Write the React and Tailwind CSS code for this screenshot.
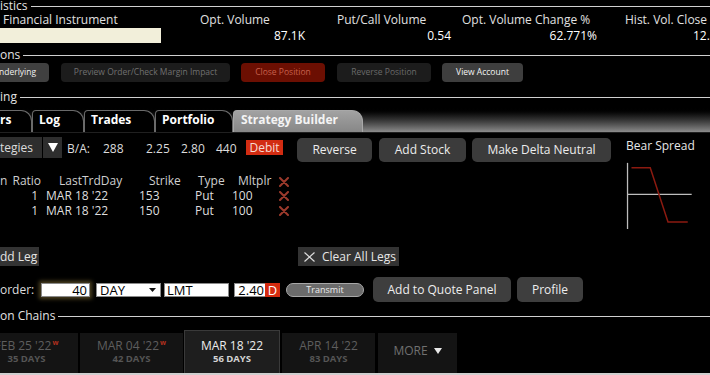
import React from "react";

function SectionHead({ label, className = "" }) {
  return (
    <div className={`flex items-center h-[12px] ${className}`}>
      <span className="text-[12px] leading-none text-[#e2e2e2] pr-[3px] whitespace-nowrap">{label}</span>
      <div className="flex-1 h-px bg-[#d0d0d0]" />
    </div>
  );
}

function Stat({ label, value, className }) {
  return (
    <div className={`flex flex-col shrink-0 ${className}`}>
      <div className="h-[16px] leading-[16px] text-[#e0e0e0] whitespace-nowrap">{label}</div>
      <div className="h-[15px] leading-[15px] text-right text-white">{value}</div>
    </div>
  );
}

function Tab({ label, className }) {
  return (
    <div
      className={`h-[22px] shrink-0 border border-b-0 rounded-tl-[4px] rounded-tr-[11px] text-[12px] font-bold leading-[18px] whitespace-nowrap ${className}`}
    >
      {label}
    </div>
  );
}

function RedX() {
  return (
    <svg width="10" height="10" viewBox="0 0 10 10" className="mt-[3px]">
      <path d="M1 1 L9 9 M9 1 L1 9" stroke="#9c3a2c" strokeWidth="2" strokeLinecap="round" />
    </svg>
  );
}

function DateTab({ date, days, weekly, active, className }) {
  return (
    <div
      className={`flex flex-col items-center shrink-0 ${
        active
          ? "h-[43px] bg-[#1e1e1e] border-t border-x border-[#3a3a3a] pt-[8px]"
          : "h-[40px] bg-[#141414] pt-[6px]"
      } ${className}`}
    >
      <div className={`text-[12px] leading-[14px] whitespace-nowrap ${active ? "text-[#ececec]" : "text-[#5e5e5e]"}`}>
        {date}
        {weekly && <sup className="text-[7px] font-bold text-[#b3301e] ml-[1px] -top-[5px]">w</sup>}
      </div>
      <div className={`text-[9.5px] font-bold leading-[11px] ${active ? "text-[#d4d4d4]" : "text-[#555]"}`}>{days}</div>
    </div>
  );
}

export default function App() {
  const legs = [
    { ratio: 1, day: "MAR 18 '22", strike: 153, type: "Put", mult: 100 },
    { ratio: 1, day: "MAR 18 '22", strike: 150, type: "Put", mult: 100 },
  ];

  return (
    <div className="w-[710px] h-[375px] overflow-hidden bg-black text-[#e6e6e6] font-['Open_Sans','Noto_Sans',sans-serif] text-[12px]">
      <SectionHead label="istics" />

      {/* statistics */}
      <div className="flex">
        <div className="flex flex-col w-[200px] shrink-0">
          <div className="h-[16px] leading-[16px] pl-[3px] text-[#e0e0e0]">Financial Instrument</div>
          <div className="h-[15px] w-[161px] bg-[#f2efda]" />
        </div>
        <Stat label="Opt. Volume" value="87.1K" className="w-[105px]" />
        <Stat label="Put/Call Volume" value="0.54" className="ml-[32px] w-[114px]" />
        <Stat label="Opt. Volume Change %" value="62.771%" className="ml-[11px] w-[135px]" />
        <div className="flex flex-col ml-[28px] w-[120px] shrink-0">
          <div className="h-[16px] leading-[16px] text-[#e0e0e0] whitespace-nowrap">Hist. Vol. Close</div>
          <div className="h-[15px] leading-[15px] pl-[68px] text-white whitespace-nowrap">12.</div>
        </div>
      </div>

      <SectionHead label="ons" className="mt-[6px]" />

      {/* action buttons */}
      <div className="flex h-[19px] mt-[2px] text-[8.5px]">
        <div className="w-[49px] bg-[#404040] rounded-r-[4px] flex items-center -indent-[1px] text-[#f0f0f0]">nderlying</div>
        <div className="ml-[12px] w-[169px] bg-[#1c1c1c] rounded-[4px] flex items-center justify-center text-[#707070]">
          Preview Order/Check Margin Impact
        </div>
        <div className="ml-[11px] w-[84px] bg-[#6c0f02] rounded-[4px] flex items-center justify-center text-[#c8604c]">
          Close Position
        </div>
        <div className="ml-[12px] w-[94px] bg-[#1c1c1c] rounded-[4px] flex items-center justify-center text-[#6a6a6a]">
          Reverse Position
        </div>
        <div className="ml-[11px] w-[81px] bg-[#3e3e3e] rounded-[4px] flex items-center justify-center text-[#f4f4f4]">
          View Account
        </div>
      </div>

      <SectionHead label="ing" className="mt-[9px]" />

      {/* tab strip */}
      <div className="h-[30px] flex items-end bg-linear-to-b from-black from-15% to-[#8c8c8c] border-b border-[#202020]">
        <Tab label="rs" className="w-[32px] bg-black border-[#6a6a6a] border-l-0 rounded-tl-none text-white" />
        <Tab label="Log" className="w-[52px] bg-black border-[#6a6a6a] text-white pl-[6px]" />
        <Tab label="Trades" className="w-[71px] bg-black border-[#6a6a6a] text-white pl-[6px]" />
        <Tab label="Portfolio" className="w-[78px] bg-black border-[#6a6a6a] text-white pl-[6px]" />
        <Tab
          label="Strategy Builder"
          className="w-[130px] bg-linear-to-b from-[#a2a2a2] to-[#878787] border-[#a8a8a8] text-[#f4f4f4] pl-[7px]"
        />
      </div>

      {/* strategy builder */}
      <div className="flex h-[93px] mt-[4px]">
        <div className="w-[626px] shrink-0">
          <div className="flex items-start h-[25px] text-[#dcdcdc]">
            <div className="w-[42px] h-[21px] bg-[#2e2e2e] leading-[21px] whitespace-nowrap">tegies</div>
            <div className="ml-[1px] w-[19px] h-[21px] bg-[#2e2e2e] flex items-center justify-center">
              <svg width="10" height="9" viewBox="0 0 10 9">
                <polygon points="0,0 10,0 5,9" fill="#fff" />
              </svg>
            </div>
            <span className="ml-[5px] w-[36px] leading-[21px] mt-[1px]">B/A:</span>
            <span className="w-[43px] leading-[21px] mt-[1px]">288</span>
            <span className="w-[35px] leading-[21px] mt-[1px]">2.25</span>
            <span className="w-[35px] leading-[21px] mt-[1px]">2.80</span>
            <span className="w-[30px] leading-[21px] mt-[1px]">440</span>
            <div className="w-[37px] h-[15px] mt-[3px] bg-[#d22c12] text-[#f7dcd4] leading-[15px] text-center">Debit</div>
            <div className="ml-[14px] w-[75px] h-[24px] mt-[1px] rounded-[5px] bg-[#3b3b3b] flex items-center justify-center text-[#ececec]">
              Reverse
            </div>
            <div className="ml-[7px] w-[87px] h-[24px] mt-[1px] rounded-[5px] bg-[#3b3b3b] flex items-center justify-center text-[#ececec]">
              Add Stock
            </div>
            <div className="ml-[6px] w-[139px] h-[24px] mt-[1px] rounded-[5px] bg-[#3b3b3b] flex items-center justify-center text-[#ececec]">
              Make Delta Neutral
            </div>
          </div>

          {/* legs table */}
          <div className="mt-[12px] flex h-[14px] leading-[14px] text-[#cfcfcf] whitespace-nowrap">
            <span className="w-[59px]">n <span className="ml-[2px]">Ratio</span></span>
            <span className="w-[90px]">LastTrdDay</span>
            <span className="w-[49px]">Strike</span>
            <span className="w-[40px]">Type</span>
            <span className="w-[41px]">Mltplr</span>
            <RedX />
          </div>
          {legs.map((l, i) => (
            <div key={i} className="flex h-[15px] leading-[15px] text-[#dedede] whitespace-nowrap">
              <span className="w-[38px] text-right">{l.ratio}</span>
              <span className="ml-[8px] w-[93px]">{l.day}</span>
              <span className="w-[56px]">{l.strike}</span>
              <span className="w-[37px]">{l.type}</span>
              <span className="w-[47px]">{l.mult}</span>
              <RedX />
            </div>
          ))}
        </div>

        <div className="flex-1 flex flex-col">
          <div className="mt-[1px] leading-[15px] text-[#e6e6e6] whitespace-nowrap">Bear Spread</div>
          <svg width="84" height="78" viewBox="0 0 84 78">
            <line x1="1" y1="10" x2="1" y2="77" stroke="#bdbdbd" strokeWidth="1.3" />
            <line x1="1" y1="42" x2="66" y2="42" stroke="#bdbdbd" strokeWidth="1.3" />
            <polyline points="5,15 24,15 42,70 62,70" fill="none" stroke="#8c1a10" strokeWidth="1.5" />
          </svg>
        </div>
      </div>

      {/* leg buttons */}
      <div className="flex h-[19px] mt-[17px]">
        <div className="w-[39px] bg-[#333] leading-[19px] text-[#e6e6e6] whitespace-nowrap">dd Leg</div>
        <div className="ml-[259px] w-[101px] bg-[#333] flex items-center pl-[6px] text-[#e6e6e6] whitespace-nowrap">
          <svg width="11" height="10" viewBox="0 0 11 10">
            <path d="M0.5 0.5 L10.5 9.5 M10.5 0.5 L0.5 9.5" stroke="#dcdcdc" strokeWidth="1.2" />
          </svg>
          <span className="ml-[7px]">Clear All Legs</span>
        </div>
      </div>

      {/* order row */}
      <div className="flex items-center h-[25px] mt-[11px] text-[13px]">
        <span className="w-[41px] text-[12px] text-[#dcdcdc]">order:</span>
        <div className="w-[49px] h-[14px] bg-white border border-[#8a8a8a] text-black text-right pr-[2px] leading-[12px] shadow-[0_0_4px_2px_rgba(140,120,60,0.55)]">
          40
        </div>
        <div className="ml-[6px] w-[65px] h-[14px] bg-white border border-[#8a8a8a] text-black leading-[12px] pl-[3px] pr-[4px] flex items-center justify-between">
          <span>DAY</span>
          <svg width="7" height="4" viewBox="0 0 7 4">
            <polygon points="0,0 7,0 3.5,4" fill="#111" />
          </svg>
        </div>
        <div className="ml-[3px] w-[65px] h-[14px] bg-white border border-[#8a8a8a] text-black leading-[12px] pl-[2px]">LMT</div>
        <div className="ml-[5px] flex">
          <div className="w-[31px] h-[14px] bg-white border border-r-0 border-[#8a8a8a] text-black text-right pr-[1px] leading-[12px]">2.40</div>
          <div className="w-[15px] h-[14px] bg-[#d42b10] text-white text-center leading-[14px]">D</div>
        </div>
        <div className="ml-[6px] w-[78px] h-[14px] rounded-full bg-[#6b6b6b] border border-[#a8a8a8] text-[9px] leading-[12px] text-center text-[#ececec]">
          Transmit
        </div>
        <div className="ml-[9px] w-[138px] h-[25px] rounded-[5px] bg-[#3e3e3e] flex items-center justify-center text-[12px] text-[#ededed]">
          Add to Quote Panel
        </div>
        <div className="ml-[6px] w-[66px] h-[25px] rounded-[5px] bg-[#3e3e3e] flex items-center justify-center text-[12px] text-[#ededed]">
          Profile
        </div>
      </div>

      <SectionHead label="on Chains" className="mt-[8px]" />

      {/* expiry tabs */}
      <div className="flex items-end h-[43px] mt-[8px]">
        <DateTab date="FEB 25 '22" days="35 DAYS" weekly className="w-[103px] -ml-[25px]" />
        <DateTab date="MAR 04 '22" days="42 DAYS" weekly className="ml-[2px] w-[103px]" />
        <DateTab date="MAR 18 '22" days="56 DAYS" active className="ml-[1px] w-[96px]" />
        <DateTab date="APR 14 '22" days="83 DAYS" className="ml-[2px] w-[93px]" />
        <div className="ml-[3px] w-[79px] h-[40px] shrink-0 bg-[#141414] flex items-center justify-center pb-[4px] text-[#707070]">
          MORE
          <svg width="8" height="6" viewBox="0 0 8 6" className="ml-[6px]">
            <polygon points="0,0 8,0 4,6" fill="#e8e8e8" />
          </svg>
        </div>
      </div>
      <div className="h-[2px] bg-[#cfcfcf]" />
    </div>
  );
}
